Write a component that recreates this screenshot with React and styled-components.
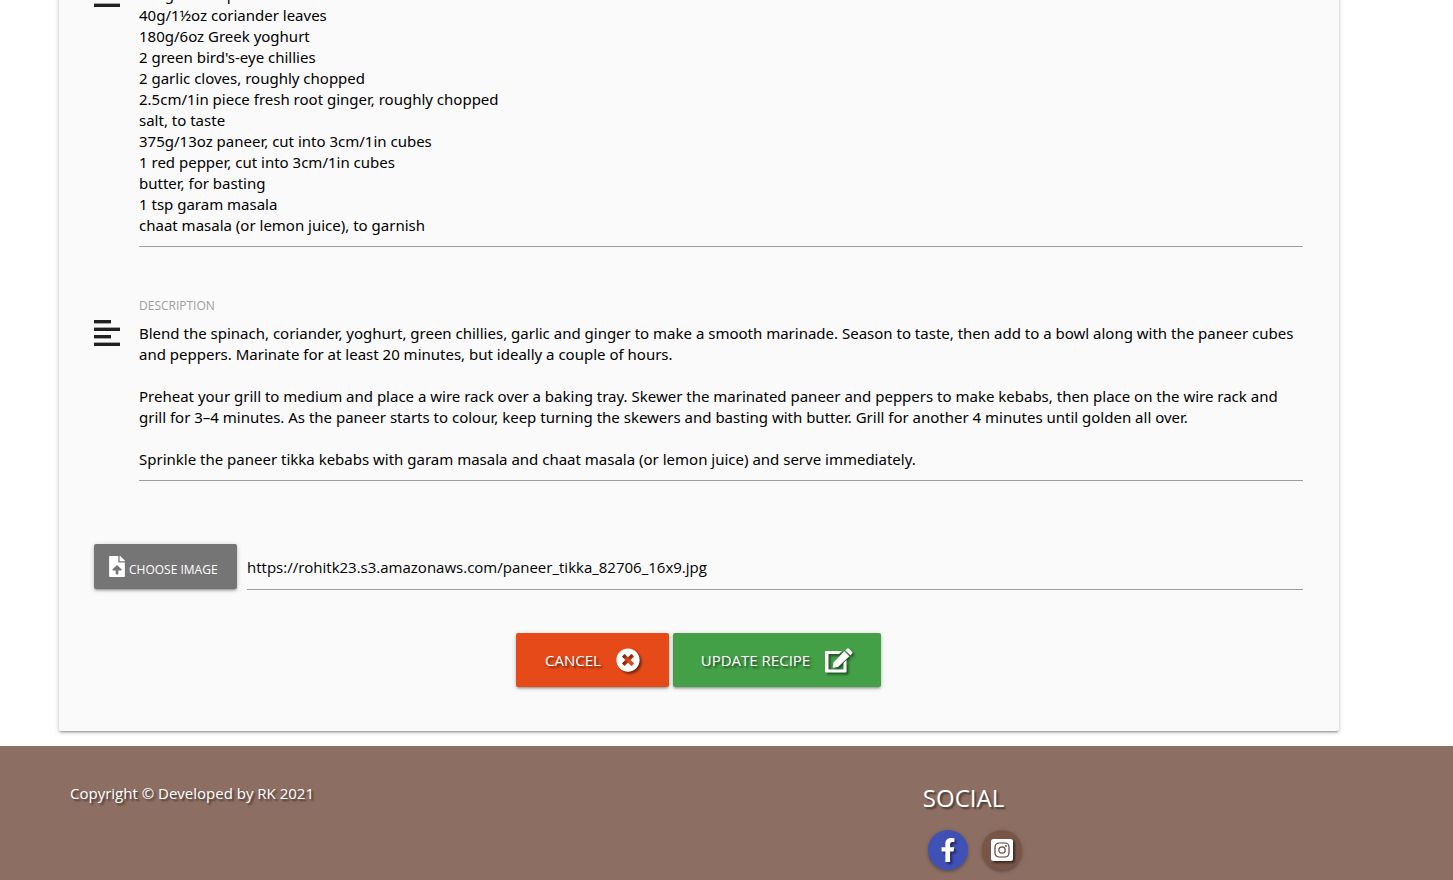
import React from "react";
import styled, { createGlobalStyle } from "styled-components";
import { FaTimesCircle, FaFileUpload, FaFacebookF } from "react-icons/fa";

const GlobalStyle = createGlobalStyle`
  * { box-sizing: border-box; }
  body {
    margin: 0;
    background: #fff;
    color: rgba(0, 0, 0, 0.87);
    font-family: "Open Sans", "Noto Sans", sans-serif;
    font-size: 15px;
    overflow-x: hidden;
  }
`;

const Viewport = styled.div`
  height: 100vh;
  overflow: hidden;
`;

const Scrolled = styled.div`
  margin-top: -43px;
`;

const Card = styled.form`
  width: calc(100% - 118px);
  max-width: 1280px;
  margin: 0 auto 15px 59px;
  padding: 0 36px 44px 35px;
  background: #fafafa;
  border-radius: 2px;
  box-shadow: 0 2px 2px 0 rgba(0, 0, 0, 0.14), 0 3px 1px -2px rgba(0, 0, 0, 0.12),
    0 1px 5px 0 rgba(0, 0, 0, 0.2);
`;

const Field = styled.div`
  display: grid;
  grid-template-columns: 26px 1fr;
  column-gap: 19px;
  margin-bottom: 49px;
`;

const Label = styled.label`
  grid-column: 2;
  height: 20px;
  margin-bottom: 7px;
  color: #9e9e9e;
  font-size: 12px;
  line-height: 20px;
  text-transform: uppercase;
`;

const LinesIcon = styled.svg`
  width: 26px;
  height: 27px;
  margin-top: -3px;
  fill: #212121;
`;

const TextArea = styled.textarea`
  display: block;
  width: 100%;
  height: ${(p) => p.$lines * 21 + 11}px;
  padding: 0;
  border: 0;
  border-bottom: 1px solid #9e9e9e;
  border-radius: 0;
  outline: none;
  resize: none;
  overflow: hidden;
  background: transparent;
  color: #000;
  font-family: "Noto Sans", "Open Sans", sans-serif;
  font-size: 15px;
  line-height: 21px;
`;

const FileRow = styled.div`
  display: flex;
  align-items: flex-start;
  gap: 10px;
  margin-top: 63px;
`;

const raised = `
  border: 0;
  border-radius: 2px;
  color: #fff;
  font-family: inherit;
  text-transform: uppercase;
  white-space: nowrap;
  cursor: pointer;
  box-shadow: 0 2px 2px 0 rgba(0,0,0,0.14), 0 3px 1px -2px rgba(0,0,0,0.12), 0 1px 5px 0 rgba(0,0,0,0.2);
`;

const ChooseButton = styled.button`
  ${raised}
  display: flex;
  align-items: center;
  justify-content: flex-start;
  gap: 4px;
  width: 143px;
  height: 45px;
  padding: 0 0 0 15px;
  background: #757575;
  font-size: 12px;

  svg { width: 16px; }
  span { padding-top: 5px; }
`;

const FilePath = styled.input`
  flex: 1;
  min-width: 0;
  height: 46px;
  padding: 0;
  border: 0;
  border-bottom: 1px solid #9e9e9e;
  outline: none;
  background: transparent;
  color: #000;
  font: inherit;
`;

const Actions = styled.div`
  display: flex;
  justify-content: center;
  gap: 4px;
  margin-top: 43px;
`;

const ActionButton = styled.button`
  ${raised}
  display: flex;
  align-items: center;
  justify-content: center;
  gap: 15px;
  width: ${(p) => p.$width}px;
  height: 54px;
  padding: 0;
  background: ${(p) => p.$color};
  font-size: 15px;
  text-shadow: 2px 2px 2px rgba(0, 0, 0, 0.5);

  svg { filter: drop-shadow(2px 2px 1px rgba(0, 0, 0, 0.5)); }
`;

const Footer = styled.footer`
  display: grid;
  grid-template-columns: 37fr 23fr;
  min-height: 150px;
  padding: 36px 0 10px 70px;
  background: #8d6e63;
  color: #fff;
  text-shadow: 2px 2px 2px rgba(0, 0, 0, 0.5);
`;

const Copyright = styled.p`
  margin: 0;
  line-height: 22px;
`;

const Social = styled.section`
  h2 {
    margin: 0 0 17px;
    font-size: 24px;
    font-weight: 400;
    line-height: 31px;
  }
`;

const SocialLinks = styled.div`
  display: flex;
  gap: 14px;
  padding-left: 5px;
`;

const SocialLink = styled.a`
  display: flex;
  align-items: center;
  justify-content: center;
  width: 40px;
  height: 40px;
  border-radius: 50%;
  background: ${(p) => p.$color};
  color: #fff;
  box-shadow: 0 2px 2px 0 rgba(0, 0, 0, 0.14), 0 1px 5px 0 rgba(0, 0, 0, 0.2);

  svg { filter: drop-shadow(2px 2px 1px rgba(0, 0, 0, 0.5)); }
`;

const ingredients = `100g/3½oz spinach
40g/1½oz coriander leaves
180g/6oz Greek yoghurt
2 green bird's-eye chillies
2 garlic cloves, roughly chopped
2.5cm/1in piece fresh root ginger, roughly chopped
salt, to taste
375g/13oz paneer, cut into 3cm/1in cubes
1 red pepper, cut into 3cm/1in cubes
butter, for basting
1 tsp garam masala
chaat masala (or lemon juice), to garnish`;

const description = `Blend the spinach, coriander, yoghurt, green chillies, garlic and ginger to make a smooth marinade. Season to taste, then add to a bowl along with the paneer cubes and peppers. Marinate for at least 20 minutes, but ideally a couple of hours.

Preheat your grill to medium and place a wire rack over a baking tray. Skewer the marinated paneer and peppers to make kebabs, then place on the wire rack and grill for 3–4 minutes. As the paneer starts to colour, keep turning the skewers and basting with butter. Grill for another 4 minutes until golden all over.

Sprinkle the paneer tikka kebabs with garam masala and chaat masala (or lemon juice) and serve immediately.`;

function AlignLeft() {
  return (
    <LinesIcon viewBox="0 0 26 27" aria-hidden="true">
      <rect x="0" y="0" width="17" height="3.4" />
      <rect x="0" y="7.6" width="26" height="3.4" />
      <rect x="0" y="15" width="17" height="3.4" />
      <rect x="0" y="22.6" width="26" height="3.4" />
    </LinesIcon>
  );
}

function EditIcon() {
  return (
    <svg width="28" height="25" viewBox="0 0 28 25" fill="#fff" aria-hidden="true">
      <path d="M1 3H17L14 6H3.5V21.5H18.5V15L21.5 12V23.5Q21.5 24.5 20.5 24.5H1Q0 24.5 0 23.5V4Q0 3 1 3Z" />
      <path d="M19.3 3.3L24.3 8.3L13 19L7.8 19.8L8.5 14.5Z" />
      <path d="M20.3 2.3L22 .7Q23 -.2 24 .7L27 3.7Q28 4.7 27 5.7L25.3 7.3Z" />
    </svg>
  );
}

function InstagramIcon() {
  return (
    <svg width="22" height="22" viewBox="0 0 22 22" aria-hidden="true">
      <rect width="22" height="22" rx="2.5" fill="#fff" />
      <rect x="4" y="4" width="14" height="14" rx="4" fill="none" stroke="#5d4037" strokeWidth="1.2" />
      <circle cx="11" cy="11" r="3.2" fill="none" stroke="#5d4037" strokeWidth="1.2" />
      <circle cx="15" cy="7" r="0.9" fill="#5d4037" />
    </svg>
  );
}

function TextField({ id, label, lines, value }) {
  return (
    <Field>
      <Label htmlFor={id}>{label}</Label>
      <AlignLeft />
      <TextArea id={id} $lines={lines} defaultValue={value} spellCheck={false} />
    </Field>
  );
}

export default function App() {
  return (
    <Viewport>
      <GlobalStyle />
      <Scrolled>
        <Card onSubmit={(e) => e.preventDefault()}>
          <TextField id="ingredients" label="Ingredients" lines={12} value={ingredients} />
          <TextField id="description" label="Description" lines={7} value={description} />
          <FileRow>
            <ChooseButton type="button">
              <FaFileUpload size={21} />
              <span>Choose image</span>
            </ChooseButton>
            <FilePath
              aria-label="Image address"
              type="text"
              defaultValue="https://rohitk23.s3.amazonaws.com/paneer_tikka_82706_16x9.jpg"
            />
          </FileRow>
          <Actions>
            <ActionButton type="button" $color="#e64a19" $width={153}>
              Cancel <FaTimesCircle size={24} />
            </ActionButton>
            <ActionButton type="submit" $color="#43a047" $width={208}>
              Update recipe <EditIcon />
            </ActionButton>
          </Actions>
        </Card>
        <Footer>
          <Copyright>Copyright © Developed by RK 2021</Copyright>
          <Social>
            <h2>SOCIAL</h2>
            <SocialLinks>
              <SocialLink href="#facebook" aria-label="Facebook" $color="#3f51b5">
                <FaFacebookF size={24} />
              </SocialLink>
              <SocialLink href="#instagram" aria-label="Instagram" $color="#795548">
                <InstagramIcon />
              </SocialLink>
            </SocialLinks>
          </Social>
        </Footer>
      </Scrolled>
    </Viewport>
  );
}
